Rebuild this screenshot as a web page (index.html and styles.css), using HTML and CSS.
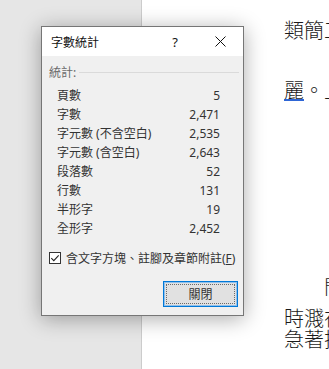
FILE: index.html
```html
<!DOCTYPE html>
<html lang="zh-Hant">
<head>
  <meta charset="UTF-8">
  <meta name="viewport" content="width=device-width, initial-scale=1.0">
  <title>字數統計</title>
  <link rel="stylesheet" href="styles.css">
</head>
<body>

<div class="screen">
  <div class="gutter"></div>

  <div class="page">
    <p class="line l1">類簡工作的人</p>
    <p class="line l2"><span class="mark">麗</span>。上面</p>
    <p class="line l3">門前的小</p>
    <p class="line l4">時濺在地上</p>
    <p class="line l5">急著把東西</p>
  </div>

  <div class="dialog">
    <div class="titlebar">
      <span class="title">字數統計</span>
      <span class="tbtn help">?</span>
      <span class="tbtn close">
        <svg width="11" height="11" viewBox="0 0 11 11">
          <path d="M0.5 0.5 L10.5 10.5 M10.5 0.5 L0.5 10.5" stroke="#111" stroke-width="1" fill="none"/>
        </svg>
      </span>
    </div>

    <div class="dbody">
      <div class="group">統計:</div>

      <div class="stats">
        <div class="row"><span>頁數</span><span>5</span></div>
        <div class="row"><span>字數</span><span>2,471</span></div>
        <div class="row"><span>字元數 (不含空白)</span><span>2,535</span></div>
        <div class="row"><span>字元數 (含空白)</span><span>2,643</span></div>
        <div class="row"><span>段落數</span><span>52</span></div>
        <div class="row"><span>行數</span><span>131</span></div>
        <div class="row"><span>半形字</span><span>19</span></div>
        <div class="row"><span>全形字</span><span>2,452</span></div>
      </div>

      <label class="check">
        <svg width="12" height="12" viewBox="0 0 12 12">
          <rect x="0.5" y="0.5" width="11" height="11" fill="#fff" stroke="#333"/>
          <path d="M2.3 6.2 L4.8 8.6 L9.7 3.4" stroke="#222" stroke-width="1.1" fill="none"/>
        </svg>
        <span>含文字方塊、註腳及章節附註(<u>F</u>)</span>
      </label>

      <div class="btnrow">
        <button class="btn"><span>關閉</span></button>
      </div>
    </div>
  </div>
</div>

</body>
</html>
```

FILE: styles.css
```css
body {
  margin: 0;
  padding: 0;
  background: #e6e6e6;
  overflow: hidden;
}

.screen {
  position: relative;
  display: flex;
  height: 369px;
  overflow: hidden;
}

.gutter {
  width: 141px;
  flex-shrink: 0;
  background: #e6e6e6;
  border-right: 1px solid #cccccc;
}

/* document page on the right */
.page {
  flex: 1;
  background: #fff;
  padding-left: 142px;
  overflow: hidden;
  font-family: "Noto Sans CJK TC", sans-serif;
  font-size: 20px;
  font-weight: 300;
  color: #1a1a1a;
}

.line {
  margin: 0;
  white-space: nowrap;
  line-height: 20px;
}

.l1 { margin-top: 20px; }
.l2 { margin-top: 40px; }
.l3 { margin-top: 177px; text-indent: 40px; }
.l4 { margin-top: 11px; line-height: 20.5px; }
.l5 { line-height: 20.5px; }

.mark {
  text-decoration: underline;
  text-decoration-color: #2e66d6;
  text-decoration-thickness: 2px;
  text-underline-offset: 1px;
}

/* dialog */
.dialog {
  position: absolute;
  left: 41px;
  top: 26px;
  width: 201px;
  border: 1px solid #767676;
  background: #f0f0f0;
  box-shadow: 0 3px 20px rgba(0, 0, 0, 0.33);
  font-family: "Noto Sans", "Noto Sans CJK TC", sans-serif;
  font-size: 12px;
  color: #333;
}

.titlebar {
  display: flex;
  align-items: center;
  height: 29px;
  background: #fff;
}

.title {
  flex: 1;
  padding-left: 9px;
  color: #111;
}

.tbtn {
  display: flex;
  align-items: center;
  justify-content: center;
  height: 29px;
}

.help {
  width: 46px;
  font-size: 13px;
  color: #111;
}

.close {
  width: 45px;
}

.dbody {
  padding: 8px 4px 8px 7px;
}

.group {
  display: flex;
  align-items: center;
  gap: 3px;
  height: 16px;
  color: #6a6a6a;
}

.group::after {
  content: '';
  flex: 1;
  border-top: 1px solid #dadada;
}

.stats {
  margin: 6px 19px 0 8px;
}

.row {
  display: flex;
  justify-content: space-between;
  height: 19px;
  line-height: 19px;
}

.check {
  display: flex;
  align-items: center;
  gap: 5px;
  height: 16px;
  margin-top: 12px;
}

.check u {
  text-underline-offset: 1px;
}

.btnrow {
  display: flex;
  justify-content: flex-end;
  margin-top: 15px;
}

.btn {
  width: 75px;
  height: 26px;
  margin-right: 1px;
  padding: 2px;
  box-sizing: border-box;
  border: 1px solid #0078d7;
  box-shadow: inset 0 0 0 1px #8fc0ec;
  background: #e1e1e1;
  font-family: "Noto Sans", "Noto Sans CJK TC", sans-serif;
  font-size: 12px;
  color: #333;
}

.btn span {
  display: flex;
  align-items: center;
  justify-content: center;
  height: 100%;
  box-sizing: border-box;
  border: 1px dotted #6b6b6b;
}
```
